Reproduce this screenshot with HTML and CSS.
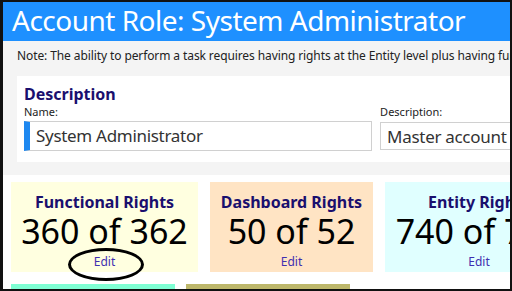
FILE: index.html
```html
<!DOCTYPE html>
<html lang="en">
<head>
    <meta charset="UTF-8">
    <title>Account Role</title>
    <link rel="stylesheet" href="styles.css">
</head>
<body>
<div id="frame">
    <div id="header">Account Role: System Administrator</div>
    <div id="main">
        <p class="note">Note: The ability to perform a task requires having rights at the Entity level plus having functional rights for that task.</p>
        <div class="panel">
            <h2>Description</h2>
            <div class="fields">
                <div class="field name-field">
                    <label>Name:</label>
                    <div class="input active">System Administrator</div>
                </div>
                <div class="field desc-field">
                    <label>Description:</label>
                    <div class="input">Master account</div>
                </div>
            </div>
        </div>
    </div>
    <div id="rights">
        <div class="row">
            <div class="card functional">
                <h3>Functional Rights</h3>
                <div class="count">360 of 362</div>
                <a href="#" class="edit circled">Edit</a>
            </div>
            <div class="card dashboard">
                <h3>Dashboard Rights</h3>
                <div class="count">50 of 52</div>
                <a href="#" class="edit">Edit</a>
            </div>
            <div class="card entity">
                <h3>Entity Rights</h3>
                <div class="count">740 of 742</div>
                <a href="#" class="edit">Edit</a>
            </div>
        </div>
        <div class="row">
            <div class="card small teal"></div>
            <div class="card small olive"></div>
        </div>
    </div>
</div>
</body>
</html>
```
FILE: styles.css
```css
* {
    padding: 0;
    margin: 0;
    box-sizing: border-box;
}

body {
    font-family: "Segoe UI", "Noto Sans", sans-serif;
    background: #ffffff;
}

#frame {
    width: 512px;
    height: 291px;
    overflow: hidden;
    border: 2px solid #111111;
    border-left-width: 3px;
    background: #ffffff;
}

#header {
    height: 39px;
    background: #1e90ff;
    color: #ffffff;
    font-size: 28px;
    letter-spacing: -0.5px;
    line-height: 37px;
    padding-left: 9px;
    white-space: nowrap;
}

#main {
    background: #f4f4f4;
    padding: 6px 0 13px 14px;
}

.note {
    font-size: 12px;
    letter-spacing: -0.1px;
    color: #222222;
    white-space: nowrap;
    height: 29px;
}

.panel {
    background: #ffffff;
    width: 520px;
    padding: 8px 0 11px 7px;
}

.panel h2 {
    font-size: 16px;
    font-weight: bold;
    color: #1a0f6e;
    line-height: 20px;
}

.fields {
    display: flex;
    gap: 8px;
}

.field label {
    display: block;
    font-size: 11px;
    color: #222222;
    line-height: 15px;
    height: 17px;
}

.input {
    height: 30px;
    border: 1px solid #d0d0d0;
    font-size: 17px;
    letter-spacing: -0.3px;
    color: #333333;
    line-height: 27px;
    padding-left: 6px;
    white-space: nowrap;
    overflow: hidden;
}

.input.active {
    border-left: 6px solid #1e88f0;
}

.name-field {
    width: 355px;
}

.desc-field {
    width: 160px;
}

.desc-field .input {
    margin-top: 1px;
    height: 28px;
}

#rights {
    padding: 7px 0 0 8px;
}

.row {
    display: flex;
    gap: 12px;
    margin-bottom: 12px;
}

.card {
    flex: none;
    height: 90px;
    padding: 9px 8px 0;
    text-align: center;
    position: relative;
}

.card h3 {
    font-size: 16px;
    font-weight: bold;
    color: #1a0f6e;
    line-height: 22px;
}

.count {
    font-size: 34px;
    color: #000000;
    line-height: 36px;
    white-space: nowrap;
}

.edit {
    display: inline-block;
    font-size: 12px;
    color: #3f2fb0;
    text-decoration: none;
    line-height: 16px;
}

.edit.circled {
    position: relative;
}

.circled::after {
    content: "";
    position: absolute;
    left: 50%;
    top: 50%;
    width: 70px;
    height: 27px;
    margin: -14px 0 0 -36px;
    border: 3.5px solid #000000;
    border-radius: 50%;
}

.functional {
    width: 187px;
    background: #ffffe0;
}

.dashboard {
    width: 163px;
    background: #ffe4c4;
}

.entity {
    width: 188px;
    background: #e0ffff;
}

.small {
    width: 164px;
    height: 40px;
}

.row + .row {
    gap: 11px;
}

.teal {
    background: #7fffd4;
}

.olive {
    background: #bdb76b;
}
```
